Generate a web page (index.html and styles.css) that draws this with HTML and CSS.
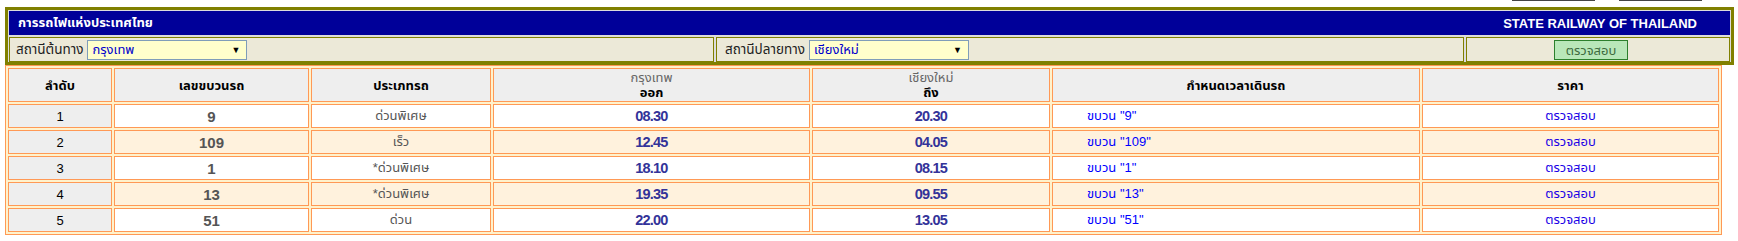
FILE: index.html
```html
<!DOCTYPE html>
<html lang="th">
<head>
<meta charset="utf-8">
<title>การรถไฟแห่งประเทศไทย</title>
<link rel="stylesheet" href="styles.css">
</head>
<body>
<div class="topbar"><span class="tb-btn"></span><span class="tb-btn"></span></div>
<div class="frame">
  <div class="titlebar">
    <span class="title-th">การรถไฟแห่งประเทศไทย</span>
    <span class="title-en">STATE RAILWAY OF THAILAND</span>
  </div>
  <div class="searchrow">
    <div class="scell scell-from">
      <span class="slabel">สถานีต้นทาง</span>
      <span class="select"><span class="select-value">กรุงเทพ</span><span class="select-arrow">▼</span></span>
    </div>
    <div class="scell scell-to">
      <span class="slabel">สถานีปลายทาง</span>
      <span class="select"><span class="select-value">เชียงใหม่</span><span class="select-arrow">▼</span></span>
    </div>
    <div class="scell scell-btn">
      <button class="check-btn" type="button">ตรวจสอบ</button>
    </div>
  </div>
</div>
<table class="trains">
  <colgroup>
    <col class="c1"><col class="c2"><col class="c3"><col class="c4"><col class="c5"><col class="c6"><col class="c7">
  </colgroup>
  <thead>
    <tr>
      <th>ลำดับ</th>
      <th>เลขขบวนรถ</th>
      <th>ประเภทรถ</th>
      <th><span class="st">กรุงเทพ</span><br>ออก</th>
      <th><span class="st">เชียงใหม่</span><br>ถึง</th>
      <th>กำหนดเวลาเดินรถ</th>
      <th>ราคา</th>
    </tr>
  </thead>
  <tbody>
    <tr class="odd">
      <td class="no">1</td><td class="num">9</td><td class="type">ด่วนพิเศษ</td><td class="time">08.30</td><td class="time">20.30</td><td class="sched"><a href="#">ขบวน "9"</a></td><td class="price"><a href="#">ตรวจสอบ</a></td>
    </tr>
    <tr class="even">
      <td class="no">2</td><td class="num">109</td><td class="type">เร็ว</td><td class="time">12.45</td><td class="time">04.05</td><td class="sched"><a href="#">ขบวน "109"</a></td><td class="price"><a href="#">ตรวจสอบ</a></td>
    </tr>
    <tr class="odd">
      <td class="no">3</td><td class="num">1</td><td class="type">*ด่วนพิเศษ</td><td class="time">18.10</td><td class="time">08.15</td><td class="sched"><a href="#">ขบวน "1"</a></td><td class="price"><a href="#">ตรวจสอบ</a></td>
    </tr>
    <tr class="even">
      <td class="no">4</td><td class="num">13</td><td class="type">*ด่วนพิเศษ</td><td class="time">19.35</td><td class="time">09.55</td><td class="sched"><a href="#">ขบวน "13"</a></td><td class="price"><a href="#">ตรวจสอบ</a></td>
    </tr>
    <tr class="odd">
      <td class="no">5</td><td class="num">51</td><td class="type">ด่วน</td><td class="time">22.00</td><td class="time">13.05</td><td class="sched"><a href="#">ขบวน "51"</a></td><td class="price"><a href="#">ตรวจสอบ</a></td>
    </tr>
  </tbody>
</table>
</body>
</html>
```
FILE: styles.css
```css
html, body {
  margin: 0;
  padding: 0;
  background: #ffffff;
}
body {
  padding: 0 5px;
  font-family: Tahoma, "Liberation Sans", "Noto Sans Thai", "Noto Sans", sans-serif;
  font-size: 13px;
  color: #000;
}
.topbar {
  height: 7px;
  display: flex;
  justify-content: flex-end;
  gap: 24px;
  padding-right: 31px;
}
.tb-btn {
  width: 83px;
  height: 1px;
  background: #444;
}
.frame {
  width: 1729px;
  box-sizing: border-box;
  border: 3px solid #808000;
  background: #dcdcdc;
  padding: 1px 1px 0 1px;
}
.titlebar {
  height: 24px;
  background: #000099;
  color: #fff;
  font-weight: bold;
  font-size: 13px;
  display: flex;
  align-items: center;
  justify-content: space-between;
  padding: 0 33px 0 9px;
}
.searchrow {
  margin-top: 2px;
  display: grid;
  grid-template-columns: 705px 748px 1fr;
  gap: 2px;
  height: 25px;
}
.scell {
  background: #ece9d8;
  border: 1px solid #808000;
  display: flex;
  align-items: center;
  padding: 0 6px;
  gap: 4px;
  color: #222;
  font-size: 13.5px;
}
.scell-to {
  padding-left: 8px;
}
.scell-btn {
  justify-content: center;
}
.select {
  width: 160px;
  height: 20px;
  box-sizing: border-box;
  border: 1px solid #7f9db9;
  background: #ffffcc;
  display: flex;
  align-items: center;
  justify-content: space-between;
  padding: 0 6px 0 4px;
  color: #0000cc;
  font-size: 13px;
}
.select-arrow {
  color: #000;
  font-size: 9px;
}
.check-btn {
  width: 74px;
  height: 20px;
  background: #b9e7b9;
  border: 1px solid #2c7f2c;
  color: #3e6a3e;
  font-family: inherit;
  font-size: 13px;
  padding: 0;
  margin-left: -14px;
}
.trains {
  width: 1713px;
  table-layout: fixed;
  border-collapse: separate;
  border-spacing: 2px;
  border: 1px solid #ff9955;
  background: #fff2cc;
}
.c1 { width: 104px; }
.c2 { width: 195px; }
.c3 { width: 180px; }
.c4 { width: 317px; }
.c5 { width: 238px; }
.c6 { width: 368px; }
.c7 { width: 297px; }
.trains th, .trains td {
  border: 1px solid #ff9955;
  padding: 0;
  text-align: center;
  vertical-align: middle;
}
.trains th {
  height: 32px;
  background: #eeeeee;
  font-weight: bold;
  font-size: 13px;
  line-height: 15px;
}
.trains th .st {
  font-weight: normal;
  color: #666;
}
.trains td {
  height: 22px;
  font-size: 13px;
}
.trains tr.odd td { background: #ffffff; }
.trains tr.even td { background: #fff2dd; }
.trains tr td.no { background: #eeeeee; color: #000; }
.trains td.num {
  font-family: "Liberation Sans", Arial, sans-serif;
  font-weight: bold;
  color: #555;
  font-size: 15px;
}
.trains td.type { color: #555; }
.trains td.time {
  font-family: "Liberation Sans", Arial, sans-serif;
  font-weight: bold;
  color: #333399;
  font-size: 14.5px;
  letter-spacing: -0.8px;
}
.trains td.sched {
  text-align: left;
  padding-left: 34px;
}
.trains a {
  color: #0000ff;
  text-decoration: none;
}
.trains td.price a { color: #1a00e6; }
```
